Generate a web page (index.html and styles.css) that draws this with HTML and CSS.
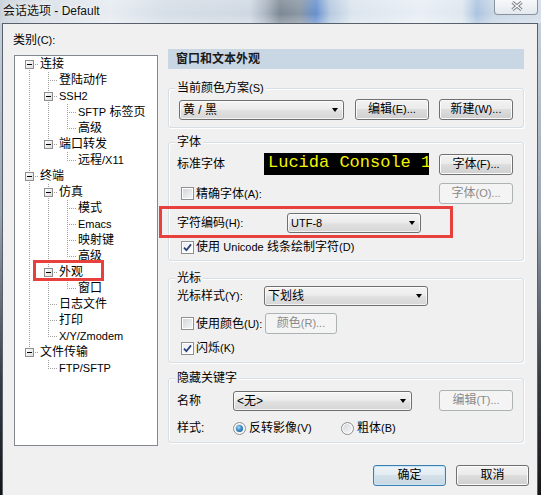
FILE: index.html
```html
<!DOCTYPE html>
<html lang="zh-CN">
<head>
<meta charset="utf-8">
<title>会话选项 - Default</title>
<link rel="stylesheet" href="styles.css">
</head>
<body>
<div class="window">
  <div class="titlebar">
    <span class="title">会话选项 - Default</span>
    <div class="close">
      <svg width="12" height="10" viewBox="0 0 12 10">
        <path d="M1.5 1.2 L10.5 8.8 M10.5 1.2 L1.5 8.8" stroke="#7a7f86" stroke-width="3.2" fill="none"/>
        <path d="M1.5 1.2 L10.5 8.8 M10.5 1.2 L1.5 8.8" stroke="#f6f7f8" stroke-width="1.3" fill="none"/>
      </svg>
    </div>
  </div>
  <div class="frame">
    <div class="client">
      <div class="main">
        <div class="leftcol">
          <div class="cat">类别<span class="en">(C):</span></div>
          <div class="tree">
            <div class="r"><span class="c first"><i class="box"></i></span><span class="t">连接</span></div>
            <div class="r"><span class="c v"></span><span class="c tee"></span><span class="t">登陆动作</span></div>
            <div class="r"><span class="c v"></span><span class="c tee"><i class="box"></i></span><span class="t en">SSH2</span></div>
            <div class="r"><span class="c v"></span><span class="c v"></span><span class="c tee"></span><span class="t"><span class="en">SFTP</span> 标签页</span></div>
            <div class="r"><span class="c v"></span><span class="c v"></span><span class="c elb"></span><span class="t">高级</span></div>
            <div class="r"><span class="c v"></span><span class="c elb"><i class="box"></i></span><span class="t">端口转发</span></div>
            <div class="r"><span class="c v"></span><span class="c"></span><span class="c elb"></span><span class="t">远程<span class="en">/X11</span></span></div>
            <div class="r"><span class="c tee"><i class="box"></i></span><span class="t">终端</span></div>
            <div class="r"><span class="c v"></span><span class="c tee"><i class="box"></i></span><span class="t">仿真</span></div>
            <div class="r"><span class="c v"></span><span class="c v"></span><span class="c tee"></span><span class="t">模式</span></div>
            <div class="r"><span class="c v"></span><span class="c v"></span><span class="c tee"></span><span class="t en">Emacs</span></div>
            <div class="r"><span class="c v"></span><span class="c v"></span><span class="c tee"></span><span class="t">映射键</span></div>
            <div class="r"><span class="c v"></span><span class="c v"></span><span class="c elb"></span><span class="t">高级</span></div>
            <div class="r"><span class="c v"></span><span class="c tee"><i class="box"></i></span><span class="t">外观</span></div>
            <div class="r"><span class="c v"></span><span class="c v"></span><span class="c elb"></span><span class="t">窗口</span></div>
            <div class="r"><span class="c v"></span><span class="c tee"></span><span class="t">日志文件</span></div>
            <div class="r"><span class="c v"></span><span class="c tee"></span><span class="t">打印</span></div>
            <div class="r"><span class="c v"></span><span class="c elb"></span><span class="t en">X/Y/Zmodem</span></div>
            <div class="r"><span class="c elb"><i class="box"></i></span><span class="t">文件传输</span></div>
            <div class="r"><span class="c"></span><span class="c elb"></span><span class="t en">FTP/SFTP</span></div>
          </div>
        </div>

        <div class="rightcol">
          <div class="header">窗口和文本外观</div>

          <div class="group g1">
            <div class="legend">当前颜色方案<span class="en">(S)</span></div>
            <div class="row r1">
              <div class="combo w165"><span>黄 / 黑</span><i class="arrow"></i></div>
              <button class="btn b1">编辑<span class="en">(E)...</span></button>
              <button class="btn">新建<span class="en">(W)...</span></button>
            </div>
          </div>

          <div class="group g2">
            <div class="legend">字体</div>
            <div class="row g2r1">
              <span class="lab l87">标准字体</span>
              <div class="fontbox">Lucida Console 1</div>
              <button class="btn push">字体<span class="en">(F)...</span></button>
            </div>
            <div class="row g2r2">
              <label class="chk"><span class="cb"></span><span>精确字体<span class="en">(A):</span></span></label>
              <button class="btn dis push">字体<span class="en">(O)...</span></button>
            </div>
            <div class="row g2r3">
              <span class="lab l110">字符编码<span class="en">(H):</span></span>
              <div class="combo w134"><span class="en">UTF-8</span><i class="arrow"></i></div>
            </div>
            <div class="row g2r4">
              <label class="chk"><span class="cb on"><svg width="11" height="11" viewBox="0 0 11 11"><path d="M2 5.6 L4.4 8.2 L9 2.4" stroke="#2a3d7c" stroke-width="1.8" fill="none"/></svg></span><span>使用 <span class="en">Unicode</span> 线条绘制字符<span class="en">(D)</span></span></label>
            </div>
          </div>

          <div class="group g3">
            <div class="legend">光标</div>
            <div class="row g3r1">
              <span class="lab l87">光标样式<span class="en">(Y):</span></span>
              <div class="combo w164"><span>下划线</span><i class="arrow"></i></div>
            </div>
            <div class="row g3r2">
              <label class="chk w84"><span class="cb"></span><span>使用颜色<span class="en">(U):</span></span></label>
              <button class="btn dis w72">颜色<span class="en">(R)...</span></button>
            </div>
            <div class="row g3r3">
              <label class="chk"><span class="cb on"><svg width="11" height="11" viewBox="0 0 11 11"><path d="M2 5.6 L4.4 8.2 L9 2.4" stroke="#2a3d7c" stroke-width="1.8" fill="none"/></svg></span><span>闪烁<span class="en">(K)</span></span></label>
            </div>
          </div>

          <div class="group g4">
            <div class="legend">隐藏关键字</div>
            <div class="row g4r1">
              <span class="lab l56">名称</span>
              <div class="combo w179"><span>&lt;无&gt;</span><i class="arrow"></i></div>
              <button class="btn dis push">编辑<span class="en">(T)...</span></button>
            </div>
            <div class="row g4r2">
              <span class="lab l56">样式:</span>
              <label class="rad w108"><span class="rb on"></span><span>反转影像<span class="en">(V)</span></span></label>
              <label class="rad"><span class="rb"></span><span>粗体<span class="en">(B)</span></span></label>
            </div>
          </div>
        </div>
      </div>

      <div class="footer">
        <button class="btn def w73">确定</button>
        <button class="btn w73">取消</button>
      </div>
    </div>
  </div>
  <div class="mark mark-enc"></div>
  <div class="mark mark-tree"></div>
</div>
</body>
</html>
```

FILE: styles.css
```css
* { box-sizing: border-box; }
html, body { margin: 0; padding: 0; }
body {
  width: 541px;
  height: 495px;
  overflow: hidden;
  font-family: "Liberation Sans", "Noto Sans CJK SC", sans-serif;
  font-size: 12px;
  color: #000;
  background: #f0f0f0;
}
.en { font-size: 11px; }

.window {
  position: relative;
  width: 541px;
  height: 495px;
  display: flex;
  flex-direction: column;
  overflow: hidden;
}

/* ---------- title bar ---------- */
.titlebar {
  height: 23px;
  flex: none;
  display: flex;
  align-items: flex-start;
  justify-content: space-between;
  background:
    linear-gradient(180deg, rgba(255,255,255,0.15), rgba(255,255,255,0) 60%, rgba(255,255,255,0.25)),
    linear-gradient(90deg, #c3ccd6 0, #d7dee6 40px, #e7ecf1 110px, #d6dee7 165px, #cfd8e2 250px,
      #aab5c1 266px, #7d8995 280px, #8a97a4 300px, #6790cf 316px, #b5c9e0 330px, #dce5ee 352px,
      #e8eef4 420px, #dfe7ef 462px, #abc4df 477px, #c7d6e6 492px, #d3dee9 541px);
}
.title {
  margin: 3px 0 0 3px;
  line-height: 16px;
  font-size: 12px;
  color: #111;
  text-shadow: 0 0 6px #fff, 0 0 10px rgba(255,255,255,0.9);
}
.close {
  width: 44px;
  height: 15px;
  margin-right: 3px;
  border: 1px solid #8a939e;
  border-top: none;
  border-radius: 0 0 4px 4px;
  background: linear-gradient(#f6f8fa, #e3e9ef);
  display: flex;
  align-items: flex-start;
  justify-content: center;
  padding-top: 1px;
  padding-left: 2px;
}

/* ---------- frame / client ---------- */
.frame {
  flex: 1;
  display: flex;
  padding: 0 3px 0 2px;
  background: linear-gradient(180deg, #c6d0da 0, #9aa6b2 40%, #3a3e44 75%, #141516 100%);
}
.client {
  flex: 1;
  border: 1px solid #58616b;
  border-bottom: none;
  background: #f0f0f0;
  padding: 9px 0 0 10px;
  display: flex;
  flex-direction: column;
}
.main {
  display: flex;
  gap: 10px;
}
.leftcol { width: 145px; flex: none; }
.cat { line-height: 14px; height: 14px; }

/* ---------- tree ---------- */
.tree {
  margin: 8px 0 0 1px;
  width: 144px;
  height: 391px;
  border: 1px solid #828790;
  background: #fff;
  padding: 0 0 0 5px;
}
.r {
  display: flex;
  height: 16px;
  line-height: 16px;
  white-space: nowrap;
}
.t { margin-left: 1px; }
.c {
  position: relative;
  width: 19px;
  height: 16px;
  flex: none;
}
.c::before, .c::after { content: none; position: absolute; }
.v::before, .tee::before, .elb::before, .first::before {
  content: "";
  left: 9px;
  width: 1px;
  background: repeating-linear-gradient(180deg, #a0a0a0 0 1px, transparent 1px 2px);
}
.v::before, .tee::before { top: 0; height: 16px; }
.elb::before { top: 0; height: 9px; }
.first::before { top: 8px; height: 8px; }
.tee::after, .elb::after, .first::after {
  content: "";
  left: 10px;
  top: 8px;
  width: 9px;
  height: 1px;
  background: repeating-linear-gradient(90deg, transparent 0 1px, #a0a0a0 1px 2px);
}
.box {
  position: absolute;
  left: 5px;
  top: 4px;
  width: 9px;
  height: 9px;
  border: 1px solid #8e8e8e;
  background: linear-gradient(135deg, #ffffff, #dcdcdc);
  z-index: 1;
}
.box::after {
  content: "";
  position: absolute;
  left: 1px;
  top: 3px;
  width: 5px;
  height: 1px;
  background: #000;
}

/* ---------- right column ---------- */
.rightcol {
  width: 356px;
  flex: none;
  padding-top: 16px;
}
.header {
  height: 20px;
  line-height: 20px;
  background: #c9d6e3;
  font-weight: bold;
  padding-left: 8px;
  color: #1a1a1a;
}
.group {
  border: 1px solid #d5dfe5;
  border-radius: 3px;
  box-shadow: inset 1px 1px 0 #fff, 1px 1px 0 #fff;
  padding: 0 10px 6px 8px;
}
.legend {
  margin: -8px 0 0 -2px;
  padding: 0 2px;
  background: #f0f0f0;
  line-height: 14px;
  height: 14px;
  width: max-content;
}
.row {
  display: flex;
  align-items: center;
}
.lab { flex: none; line-height: 14px; }
.l56 { width: 56px; }
.l87 { width: 87px; }
.l110 { width: 110px; }

.g1 { margin-top: 19px; padding: 0 10px 7px 10px; }
.g1 .legend { margin-left: -4px; }
.g1 .r1 { margin-top: 4px; height: 21px; }

.g2 { margin-top: 14px; padding-bottom: 6px; }
.g2r1 { margin-top: 4px; height: 22px; }
.g2r2 { margin-top: 8px; height: 21px; }
.g2r3 { margin-top: 9px; height: 20px; }
.g2r4 { margin-top: 7px; height: 14px; }

.g3 { margin-top: 17px; padding-bottom: 7px; }
.g3r1 { margin-top: 1px; height: 20px; }
.g3r2 { margin-top: 7px; height: 21px; }
.g3r3 { margin-top: 7px; height: 14px; }

.g4 { margin-top: 15px; padding-bottom: 7px; }
.g4r1 { margin-top: 5px; height: 21px; }
.g4r2 { margin-top: 10px; height: 14px; }

/* ---------- font preview ---------- */
.fontbox {
  width: 165px;
  height: 22px;
  flex: none;
  background: #000;
  color: #f4f400;
  font-family: "Liberation Mono", monospace;
  font-size: 17px;
  line-height: 20px;
  padding-left: 4px;
  white-space: nowrap;
  overflow: hidden;
}

/* ---------- buttons ---------- */
.btn {
  appearance: none;
  width: 74px;
  height: 21px;
  flex: none;
  padding: 0;
  font: inherit;
  color: #000;
  line-height: 19px;
  text-align: center;
  border: 1px solid #707070;
  border-radius: 3px;
  background: linear-gradient(180deg, #f2f2f2 0, #ebebeb 45%, #dddddd 50%, #cfcfcf 100%);
  box-shadow: inset 0 0 0 1px #fbfbfb;
  white-space: nowrap;
}
.btn.dis {
  border-color: #adb2b5;
  background: #f4f4f4;
  color: #8a8a8a;
  box-shadow: none;
}
.btn.def {
  border-color: #3c7fb1;
  background: linear-gradient(180deg, #eef4f8 0, #e3ecf2 45%, #d4e1ea 50%, #c8d7e2 100%);
  box-shadow: inset 0 0 0 1px #c9e6f7;
}
.w72 { width: 72px; }
.w73 { width: 73px; }
.row .b1 { margin: 0 10px 0 11px; }
.row .push { margin-left: auto; }

/* ---------- combos ---------- */
.combo {
  height: 20px;
  flex: none;
  display: flex;
  align-items: center;
  justify-content: space-between;
  padding: 0 5px 0 3px;
  border: 1px solid #707070;
  border-radius: 3px;
  background: linear-gradient(180deg, #f4f4f4 0, #ececec 45%, #e0e0e0 55%, #d6d6d6 100%);
  box-shadow: inset 0 0 0 1px rgba(255,255,255,0.7);
  line-height: 14px;
  white-space: nowrap;
}
.w134 { width: 134px; }
.w164 { width: 164px; }
.w165 { width: 165px; }
.w179 { width: 179px; }
.arrow {
  width: 0;
  height: 0;
  border-top: 4px solid #000;
  border-left: 3.5px solid transparent;
  border-right: 3.5px solid transparent;
  flex: none;
}

/* ---------- checkbox / radio ---------- */
.chk, .rad {
  display: flex;
  align-items: center;
  gap: 2px;
  line-height: 14px;
  white-space: nowrap;
}
.chk { margin-left: 4px; }
.w84 { width: 84px; flex: none; }
.w108 { width: 108px; flex: none; }
.cb {
  width: 13px;
  height: 13px;
  flex: none;
  border: 1px solid #8e8f8f;
  background: linear-gradient(135deg, #cfd3d8, #f8f8f8);
  box-shadow: inset 0 0 0 1px #fff;
  display: flex;
  align-items: center;
  justify-content: center;
}
.cb.on { background: linear-gradient(135deg, #e9edf2, #ffffff); }
.rb {
  width: 13px;
  height: 13px;
  flex: none;
  border: 1px solid #8e8f8f;
  border-radius: 50%;
  background: linear-gradient(135deg, #d2d5d9, #fafafa);
  box-shadow: inset 0 0 0 1px #fff;
  display: flex;
  align-items: center;
  justify-content: center;
}
.rb.on::after {
  content: "";
  width: 7px;
  height: 7px;
  border-radius: 50%;
  background: radial-gradient(circle at 40% 35%, #a6defa 0, #3a8bc9 45%, #1b4f8c 100%);
}
.rad .rb { margin-right: 1px; }

/* ---------- footer ---------- */
.footer {
  display: flex;
  justify-content: flex-end;
  gap: 10px;
  margin-top: 19px;
  padding-right: 8px;
}

/* ---------- red annotation marks ---------- */
.mark {
  position: absolute;
  border: 3px solid #e8403c;
  pointer-events: none;
}
.mark-enc { left: 159px; top: 206px; width: 294px; height: 32px; }
.mark-tree { left: 33px; top: 260px; width: 71px; height: 21px; }
```
